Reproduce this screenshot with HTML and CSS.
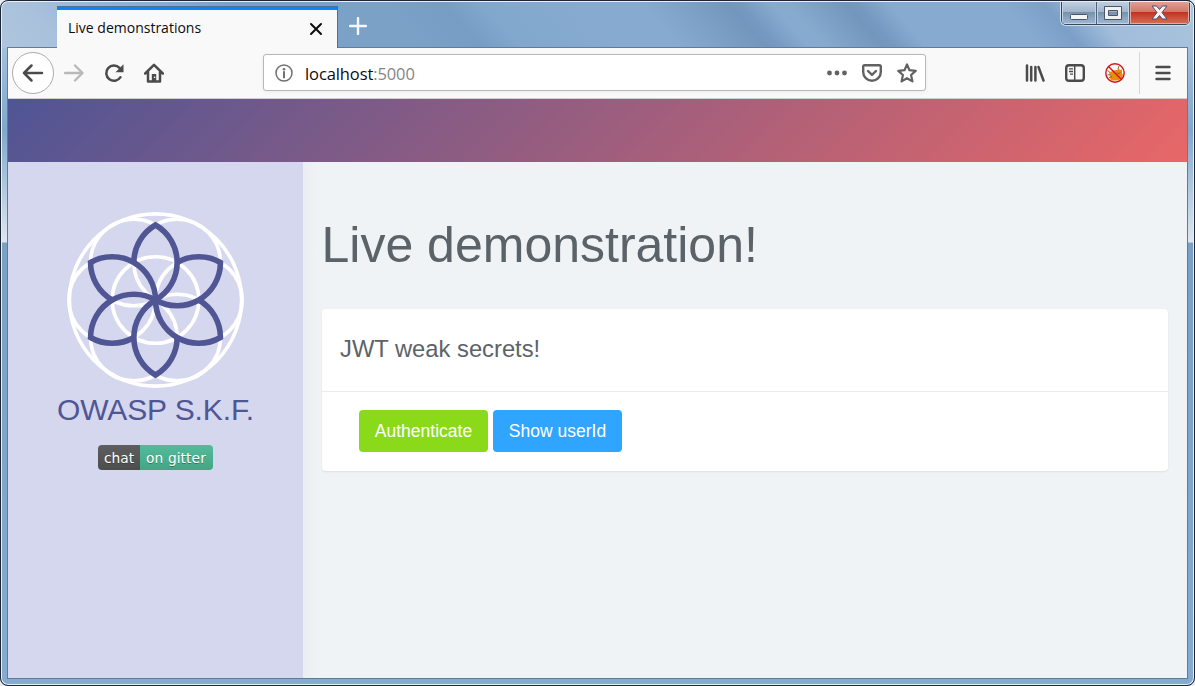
FILE: index.html
```html
<!DOCTYPE html>
<html lang="en">
<head>
<meta charset="utf-8">
<title>Live demonstrations</title>
<link rel="stylesheet" href="styles.css">
</head>
<body>
<div class="window">
  <div class="titlebar">
    <div class="tab">
      <span class="tab-title">Live demonstrations</span>
      <svg class="tab-close" width="14" height="14" viewBox="0 0 14 14"><path d="M2 2l10 10M12 2L2 12" stroke="#0c0c0d" stroke-width="2" stroke-linecap="round"/></svg>
    </div>
    <svg class="new-tab" width="18" height="18" viewBox="0 0 18 18"><path d="M9 1v16M1 9h16" stroke="#f4f8fb" stroke-width="2.4" stroke-linecap="round"/></svg>
    <div class="controls">
      <div class="control minimize"><svg width="18" height="6" viewBox="0 0 18 6"><rect x=".5" y=".5" width="17" height="5" rx="1" fill="#f5f5f5" stroke="#4c5568"/></svg></div>
      <div class="control maximize"><svg width="18" height="14" viewBox="0 0 18 14"><path fill-rule="evenodd" d="M.5.5h17v13H.5zM4.500 4.500v5h9v-5z" fill="#f1f1f1" stroke="#4c5568"/></svg></div>
      <div class="control close"><svg width="17" height="15" viewBox="0 0 17 15"><path d="M1 1h4.500l3 3.500 3-3.500H16l-5 6.500 5 6.500h-4.500l-3-3.500-3 3.500H1l5-6.500z" fill="#f2f2f2" stroke="#53515f" stroke-linejoin="round"/></svg></div>
    </div>
  </div>
  <div class="client">
    <div class="toolbar">
      <div class="nav">
        <div class="back"><svg width="22" height="20" viewBox="0 0 22 20"><path d="M20 10H2M9.500 2.500L2 10l7.500 7.500" fill="none" stroke="#4b4b4c" stroke-width="2.500" stroke-linecap="round" stroke-linejoin="round"/></svg></div>
        <svg width="20" height="20" viewBox="0 0 20 20"><path d="M1 10h17M11 2.500l7.500 7.500-7.500 7.500" fill="none" stroke="#b9b9ba" stroke-width="2.400" stroke-linecap="round" stroke-linejoin="round"/></svg>
        <svg width="20" height="20" viewBox="0 0 20 20"><path d="M16.500 14.200A7.700 7.700 0 1 1 15.500 4.800" fill="none" stroke="#4b4b4c" stroke-width="2.500" stroke-linecap="round"/><path d="M19.500 1.200v8h-8z" fill="#4b4b4c"/></svg>
        <svg width="20" height="20" viewBox="0 0 20 20"><path d="M1.200 10.500L10 1.800l8.800 8.700M4 9v9.500h12V9" fill="none" stroke="#4b4b4c" stroke-width="2.500" stroke-linecap="round" stroke-linejoin="round"/><path d="M7.800 18v-7h4.400v7" fill="#4b4b4c"/><circle cx="10.600" cy="14.200" r=".8" fill="#fff"/></svg>
      </div>
      <div class="urlbar">
        <svg width="18" height="18" viewBox="0 0 18 18"><circle cx="9" cy="9" r="8" fill="none" stroke="#707071" stroke-width="1.500"/><circle cx="9" cy="5.200" r="1.300" fill="#707071"/><path d="M9 8v5.500" stroke="#707071" stroke-width="2" stroke-linecap="round"/></svg>
        <span class="url">localhost<span class="port">:5000</span></span>
        <svg width="20" height="20" viewBox="0 0 20 20"><g fill="#616162"><circle cx="2.500" cy="10" r="2.400"/><circle cx="10" cy="10" r="2.400"/><circle cx="17.500" cy="10" r="2.400"/></g></svg>
        <svg width="20" height="20" viewBox="0 0 20 20"><path d="M2.700 2.200h14.600q1.500 0 1.500 1.500V9a8.800 8.800 0 0 1-17.600 0V3.700q0-1.500 1.500-1.500zM6 8l4 3.800L14 8" fill="none" stroke="#616162" stroke-width="2.400" stroke-linecap="round" stroke-linejoin="round"/></svg>
        <svg width="20" height="20" viewBox="0 0 20 20"><path d="M10 1.500l2.500 5.700 6.200.7-4.600 4.100 1.300 6.400L10 15.200l-5.400 3.200L5.900 12 1.300 7.900l6.200-.7z" fill="none" stroke="#616162" stroke-width="2.200" stroke-linejoin="round"/></svg>
      </div>
      <div class="tools">
        <svg width="20" height="20" viewBox="0 0 20 20"><path d="M2 2.500v15M6.200 4v13.500M10.400 4v13.500M13.500 4l5 13.500" stroke="#4b4b4c" stroke-width="2.500" stroke-linecap="round"/></svg>
        <svg width="20" height="20" viewBox="0 0 20 20"><rect x="1.200" y="2.200" width="17.600" height="15.600" rx="2.800" fill="none" stroke="#4b4b4c" stroke-width="2.400"/><path d="M9.700 2v16" stroke="#4b4b4c" stroke-width="1.500"/><path d="M4 5.800h4M4 8.500h4M5 11.200h3" stroke="#4b4b4c" stroke-width="1.300"/></svg>
        <svg width="20" height="20" viewBox="0 0 20 20"><circle cx="10" cy="10" r="9" fill="#f8f8f8"/><path d="M4 8.500q2 1 4-1l4-.500 2-1.500 1 1.500 2-.500v3l1 3-2 3.500-3 1.500H6.500q-2-2-1.500-4z" fill="#ea8d0f"/><path d="M2.500 7.500l2 1.500M2.500 12l3-.500M4 14.500l3-1M12 10l2 .500 1.500-1M13 6l1-3" fill="none" stroke="#755f36" stroke-width=".9"/><circle cx="10" cy="10" r="9.200" fill="none" stroke="#d31318" stroke-width="1.400"/><path d="M3.500 3.500l13 13" stroke="#d31318" stroke-width="1.400"/></svg>
        <div class="menu"><svg width="16" height="16" viewBox="0 0 16 16"><path d="M1.500 2h13M1.500 8h13M1.500 14h13" stroke="#4b4b4c" stroke-width="2.400" stroke-linecap="round"/></svg></div>
      </div>
    </div>
    <header class="banner"></header>
    <div class="page">
      <aside class="sidebar">
        <svg class="logo" width="180" height="180" viewBox="-89.500 -90 180 180">
          <defs><path id="petal" d="M0 0A43.300 43.300 0 0 0 0-75A43.300 43.300 0 0 0-21.650-37.500"/></defs>
          <g fill="none" stroke="#fff" stroke-width="3.600">
            <circle r="86.100"/><circle r="43.300"/>
            <circle cx="43.300" r="43.300"/><circle cx="-43.300" r="43.300"/>
            <circle cx="21.650" cy="-37.500" r="43.300"/><circle cx="-21.650" cy="-37.500" r="43.300"/>
            <circle cx="21.650" cy="37.500" r="43.300"/><circle cx="-21.650" cy="37.500" r="43.300"/>
          </g>
          <g fill="none" stroke="#505694" stroke-width="5.600">
            <use href="#petal"/><use href="#petal" transform="rotate(60)"/><use href="#petal" transform="rotate(120)"/>
            <use href="#petal" transform="rotate(180)"/><use href="#petal" transform="rotate(240)"/><use href="#petal" transform="rotate(300)"/>
          </g>
        </svg>
        <div class="brand">OWASP S.K.F.</div>
        <div class="badge"><span class="badge-key">chat</span><span class="badge-value">on gitter</span></div>
      </aside>
      <main class="content">
        <h1>Live demonstration!</h1>
        <section class="card">
          <h2>JWT weak secrets!</h2>
          <div class="actions"><button class="btn green">Authenticate</button><button class="btn blue">Show userId</button></div>
        </section>
      </main>
    </div>
  </div>
</div>
</body>
</html>
```
FILE: styles.css
```css
* { box-sizing: border-box; }
body { margin: 0; background: #e9edf2; overflow: hidden; }
svg { display: block; flex: none; }
.window {
  width: 1195px; height: 686px; padding: 0 7px 7px;
  border-radius: 8px;
  background:
    linear-gradient(49deg, #afc5dd 0, #a9c1dc 5%, #95b3d3 12%, #7ba1c7 22%, #7ba1c7 34%, #789dc4 39%, #82a7cd 42%, #87abd0 50%, #87abd0 55%, #7396bd 62%, #7599c0 63%, #87abd0 65.500%, #86a9ce 67%, #7396bd 71.500%, #7599c0 72.500%, #87abd0 75%, #87abd0 84%, #7c9fc8 87.500%, #a1bddb 91%, #abc4dc 100%) 0 0 / 100% 48px no-repeat,
    linear-gradient(#a4c0dc 48px, #80a8cd 130px, #dce7f0 242px, #7ba0c6 243px, #86abd0 100%);
  position: relative;
}
.window::after {
  content: ""; position: absolute; inset: 0; pointer-events: none;
  border: 1px solid #1c2535; border-radius: 8px;
  box-shadow: inset 0 0 0 1px #e8f0f7;
}
.titlebar { height: 48px; display: flex; align-items: flex-start; padding-left: 50px; box-shadow: inset 0 -1px #5f7c9d; }
.tab {
  width: 281px; height: 42px; margin-top: 6px; padding: 3px 14px 0 11px;
  display: flex; align-items: center; justify-content: space-between;
  background: #f9f9fa; border-top: 1px solid #4d7095; border-right: 1px solid #4d7095;
  box-shadow: inset 0 3px #0a84ff;
  font: 14px/20px "Open Sans", sans-serif; color: #0c0c0d;
}
.tab-title { letter-spacing: 0; margin-top: -2px; white-space: nowrap; }
.tab-close { margin-top: -1px; }
.new-tab { margin: 17px 0 0 11px; }
.controls {
  display: flex; height: 25px; width: 129px; margin: 0 -2px 0 auto;
  border: 1px solid #39475c; border-radius: 0 0 5px 5px; overflow: hidden;
  box-shadow: 0 0 0 1px #cfdeec;
}
.control { width: 35px; display: flex; align-items: center; justify-content: center; border-right: 1px solid #4c6079; background: linear-gradient(#c3d2e2 0, #9fb4ca 48%, #7892ae 50%, #9fb9d4 100%); box-shadow: inset 0 0 0 1px #c3d3e4; }
.minimize { align-items: flex-end; padding-bottom: 4px; }
.maximize { width: 33px; }
.close { flex: 1; border-right: 0; background: linear-gradient(#dfa596 0, #d07766 48%, #bf3525 50%, #d77055 100%); box-shadow: inset 0 0 0 1px #dfaba0; }
.client { height: 631px; border: solid #5d7c9c; border-width: 0 1px 1px; display: flex; flex-direction: column; }
.toolbar { height: 51px; flex: none; display: flex; align-items: center; background: #f9f9fa; border-bottom: 1px solid #cfcfd0; padding-left: 4px; }
.nav { width: 251px; display: flex; align-items: center; gap: 20px; }
.back { width: 42px; height: 42px; margin-right: -10px; border: 1px solid #adadae; border-radius: 50%; background: #fff; display: flex; align-items: center; justify-content: center; }
.urlbar {
  width: 663px; height: 37px; margin-bottom: 1px; display: flex; align-items: center; gap: 15px; padding: 0 8px 0 11px;
  border: 1px solid #b7b7b8; border-radius: 3px; background: #fff; box-shadow: 0 1px 4px rgba(0,0,0,.06);
}
.url { flex: 1; margin: 2px 0 0 -3px; font: 16.500px/24px "Open Sans", sans-serif; letter-spacing: -.1px; color: #0c0c0d; }
.port { color: #858586; }
.tools { margin-left: auto; display: flex; align-items: center; gap: 20px; }
.menu { height: 42px; width: 48px; margin-left: -6px; border-left: 1px solid #d7d7db; display: flex; align-items: center; padding-left: 15px; }
.banner { height: 63px; flex: none; background: linear-gradient(135deg, #4f5595, #e86767); }
.page { flex: 1; display: flex; font-family: "Liberation Sans", Arial, sans-serif; }
.sidebar { width: 295px; background: #d5d7ee; display: flex; flex-direction: column; align-items: center; padding-top: 48px; }
.brand { font-size: 30px; line-height: 36px; margin-top: 2px; letter-spacing: -.1px; color: #505694; white-space: nowrap; }
.badge { margin-top: 17px; height: 25px; display: flex; border-radius: 4px; overflow: hidden; color: #fff; font: 13.750px/26px "DejaVu Sans", sans-serif; text-shadow: 0 1px rgba(1,1,1,.3); }
.badge span { text-align: center; white-space: nowrap; }
.badge-key { width: 42px; background: linear-gradient(#5e5e5e, #4d4d4d); }
.badge-value { width: 73px; padding-right: 1px; letter-spacing: .1px; background: linear-gradient(#53bb9b, #43a685); }
.content { flex: 1; padding: 51px 19px 0; background: linear-gradient(90deg, #e9eef1, #eff3f6 14px); color: #5c6368; }
h1 { margin: 0; font-size: 50px; line-height: 64px; font-weight: 400; text-indent: -.5px; }
.card { margin-top: 32px; height: 162px; background: #fff; border-radius: 4px; box-shadow: 0 1px 2px rgba(0,0,0,.08); }
h2 { margin: 0; height: 83px; padding-left: 18px; border-bottom: 1px solid #e9ebed; font-size: 23.750px; line-height: 80px; font-weight: 400; }
.actions { display: flex; gap: 5px; padding: 18px 37px; }
.btn { width: 129px; height: 42px; border: 0; border-radius: 4px; padding: 0; color: #fff; font: 17.500px "Liberation Sans", Arial, sans-serif; }
.green { background: #8ada19; }
.blue { background: #30a5ff; }
```
